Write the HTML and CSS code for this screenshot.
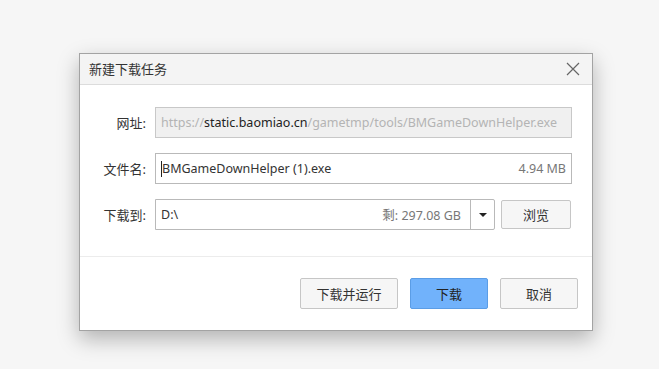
FILE: index.html
```html
<!DOCTYPE html>
<html lang="zh-CN">
<head>
  <meta charset="UTF-8">
  <title>新建下载任务</title>
  <link rel="stylesheet" href="styles.css">
</head>
<body>
  <div class="dialog">
    <div class="title-bar">
      <span class="title">新建下载任务</span>
      <span class="close">
        <svg width="14" height="14" viewBox="0 0 14 14">
          <path d="M1 1 L13 13 M13 1 L1 13" stroke="#666" stroke-width="1.2" fill="none" />
        </svg>
      </span>
    </div>

    <div class="dialog-body">
      <div class="form-row">
        <label class="label">网址:</label>
        <div class="field readonly">
          <span class="dim">https://</span><span>static.baomiao.cn</span><span class="dim">/gametmp/tools/BMGameDownHelper.exe</span>
        </div>
      </div>

      <div class="form-row">
        <label class="label">文件名:</label>
        <div class="field">
          <span class="caret"></span><span class="grow">BMGameDownHelper (1).exe</span>
          <span class="meta">4.94 MB</span>
        </div>
      </div>

      <div class="form-row row-path">
        <label class="label">下载到:</label>
        <div class="field path">
          <span class="grow">D:\</span>
          <span class="meta">剩: 297.08 GB</span>
          <span class="dropdown"><span class="triangle"></span></span>
        </div>
        <button class="btn browse">浏览</button>
      </div>
    </div>

    <div class="dialog-footer">
      <button class="btn">下载并运行</button>
      <button class="btn primary">下载</button>
      <button class="btn">取消</button>
    </div>
  </div>
</body>
</html>
```

FILE: styles.css
```css
html {
  background-color: #f6f6f6;
}

body {
  margin: 0;
  padding-top: 53px;
  min-height: 316px;
  background-color: #f6f6f6;
  font-family: 'Noto Sans', 'Noto Sans CJK SC', sans-serif;
  font-size: 13px;
  color: #333;
}

.dialog {
  width: 512px;
  height: 276px;
  margin-left: 79px;
  background-color: #fff;
  border: 1px solid #a3a3a3;
  box-shadow: 0 8px 20px rgba(0, 0, 0, 0.28);
  display: flex;
  flex-direction: column;
}

.title-bar {
  height: 30px;
  background-color: #f4f4f4;
  border-bottom: 1px solid #dcdcdc;
  display: flex;
  align-items: center;
  justify-content: space-between;
  padding: 0 12px 0 9px;
}

.title {
  font-size: 13px;
  color: #333;
  margin-top: -2px;
}

.close {
  display: flex;
}

.dialog-body {
  padding: 22px 20px 0 0;
  height: 149px;
  border-bottom: 1px solid #ececec;
}

.form-row {
  display: flex;
  align-items: center;
  margin-bottom: 15px;
}

.row-path {
  margin-top: 2px;
}

.label {
  width: 66px;
  padding-right: 9px;
  text-align: right;
  color: #333;
}

.field {
  width: 405px;
  height: 29px;
  border: 1px solid #b9b9b9;
  padding: 0 5px;
  display: flex;
  align-items: center;
  color: #333;
  font-size: 12.5px;
  white-space: nowrap;
}

.field.readonly {
  background-color: #f0f0f0;
  border-color: #c8c8c8;
  color: #222;
}

.dim {
  color: #b4b4b4;
}

.grow {
  flex: 1;
}

.caret {
  width: 1px;
  height: 16px;
  background-color: #222;
}

.meta {
  color: #777;
}

.field.path {
  width: 333px;
  padding-right: 0;
  border-radius: 0 2px 2px 0;
}

.dropdown {
  width: 23px;
  height: 100%;
  margin-left: 9px;
  border-left: 1px solid #b9b9b9;
  display: flex;
  align-items: center;
  justify-content: center;
}

.triangle {
  width: 0;
  height: 0;
  border-left: 4px solid transparent;
  border-right: 4px solid transparent;
  border-top: 4px solid #222;
}

.btn {
  font-family: inherit;
  font-size: 13px;
  color: #333;
  background-color: #f6f6f6;
  border: 1px solid #c6c6c6;
  border-radius: 2px;
  height: 31px;
  width: 78px;
  padding: 0;
}

.browse {
  height: 29px;
  width: 70px;
  margin-left: 6px;
}

.dialog-footer {
  display: flex;
  justify-content: flex-end;
  gap: 12px;
  padding: 21px 14px 0 0;
}

.dialog-footer .btn:first-child {
  width: 98px;
}

.btn.primary {
  background-color: #71b2fb;
  border-color: #5b9de6;
  color: #222;
}
```
